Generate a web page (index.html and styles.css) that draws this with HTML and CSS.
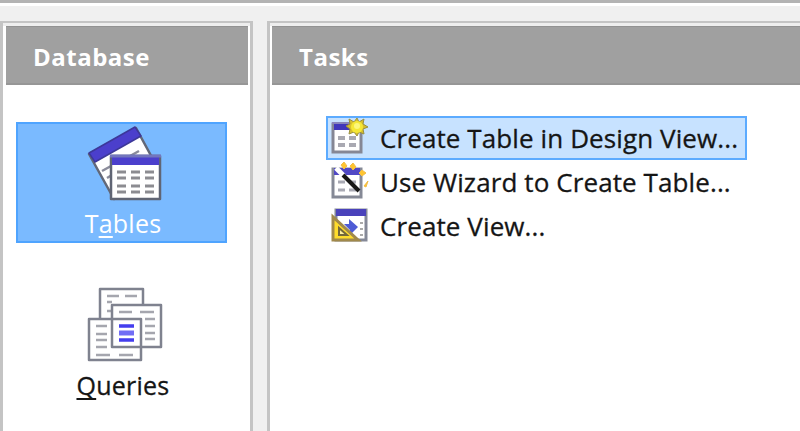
FILE: index.html
```html
<!DOCTYPE html>
<html lang="en">
<head>
<meta charset="utf-8">
<title>Database</title>
<link rel="stylesheet" href="styles.css">
</head>
<body>
<div class="toolbar-edge"></div>
<main class="workspace">
  <aside class="panel sidebar">
    <h2 class="panel-title">Database</h2>
    <nav class="objects">
      <a class="object selected">
        <svg class="object-icon" width="76" height="78" viewBox="0 0 76 78">
          <g stroke-linejoin="round">
            <path d="M2 30L49 4L68 39L27 75Z" fill="#fff" stroke="#626878" stroke-width="2.5"/>
            <path d="M2 29L48 3L54 12L8 38Z" fill="#4b3fcc" stroke="#3d3899" stroke-width="1.5"/>
            <path d="M15 47l9-5M29 39l9-5M43 32l9-5M20 54l5-3" stroke="#8b8c9b" stroke-width="2.5"/>
            <rect x="24" y="32" width="49" height="43" fill="#fff" stroke="#606574" stroke-width="2.5"/>
            <path d="M25 32h47v9H25z" fill="#4b3fcc"/>
            <path d="M23 32h51" stroke="#7376bd" stroke-width="3"/>
            <path d="M30 48h9m5 0h9m5 0h9M30 54h9m5 0h9m5 0h9M30 62h9m5 0h9m5 0h9M30 68h9m5 0h9m5 0h9" stroke="#8c8c91" stroke-width="3"/>
          </g>
        </svg>
        <span>T<u>a</u>bles</span>
      </a>
      <a class="object queries">
        <svg class="object-icon" width="76" height="78" viewBox="0 0 76 78">
          <g fill="#fff" stroke="#7f828f" stroke-width="2.5" stroke-linejoin="round">
            <rect x="13" y="3" width="43" height="42"/>
            <path d="M20 10h12m6 0h12M20 16h5M20 25h5" stroke="#a5a6ae"/>
            <rect x="25" y="19" width="49" height="42"/>
            <path d="M32 26h13m8 0h14M58 33h10M58 40h10M58 47h10M58 53h10" stroke="#a5a6ae"/>
            <rect x="2" y="33" width="52" height="41"/>
            <path d="M9 40h11M9 48h11M9 54h11M9 61h11M9 69h14m9 0h14" stroke="#a5a6ae"/>
            <path d="M25 33v28h29" fill="none"/>
          </g>
          <path d="M32 40h15M32 54h15" stroke="#443eee" stroke-width="3.5"/>
          <path d="M32 47h15" stroke="#716df5" stroke-width="5"/>
        </svg>
        <span><u>Q</u>ueries</span>
      </a>
    </nav>
  </aside>
  <section class="panel tasks">
    <h2 class="panel-title">Tasks</h2>
    <div class="task-list">
      <a class="task selected">
        <svg class="task-icon" width="40" height="40" viewBox="0 0 40 40">
          <rect x="3" y="6" width="28" height="28" fill="#fff" stroke="#858795" stroke-width="3"/>
          <path d="M4 6h26v6H4z" fill="#4037bb"/>
          <path d="M2 5h27" stroke="#8885bb" stroke-width="2"/>
          <path d="M8 20h7m4 0h7M8 27h7m4 0h7" stroke="#a9a9b2" stroke-width="4"/>
          <path d="M27 0l2 4 5-3-1 5 5 3-5 2 1 5-5-2-2 4-3-4-5 2 1-5-4-3 4-2-1-5 5 3z" fill="#d8bf2d" stroke="#999040"/>
          <circle cx="27" cy="9" r="6" fill="#f5e736"/><circle cx="27" cy="8" r="3" fill="#fcf77c"/>
        </svg>
        <span>Create Table in Design View...</span>
      </a>
      <a class="task">
        <svg class="task-icon" width="40" height="40" viewBox="0 0 40 40">
          <rect x="3" y="7" width="28" height="28" fill="#fff" stroke="#858996" stroke-width="3"/>
          <path d="M4 6h26v7H4z" fill="#5048c5"/>
          <path d="M8 20h7m4 0h7M8 28h7m4 0h7" stroke="#a9aab4" stroke-width="3"/>
          <path d="M11 3l3-3 3 4-3 3zm9 1l3-3 3 4-3 3zm9 7l3-3 4 3-4 3zm5 13l4-5-2 6z" fill="#ffc52f" stroke="#f1bc48"/>
          <path d="M6 6l8 8" stroke="#fff" stroke-width="5"/>
          <path d="M13 13l16 16" stroke="#171717" stroke-width="4"/>
        </svg>
        <span>Use Wizard to Create Table...</span>
      </a>
      <a class="task">
        <svg class="task-icon" width="40" height="40" viewBox="0 0 40 40">
          <path d="M6 4h30v30H6z" fill="#fff" stroke="#858998" stroke-width="3"/>
          <path d="M6 3h30v7H6z" fill="#4a42bb"/>
          <path d="M14 18h5v-5l9 8-8 8v-5z" fill="#4e5bd5"/>
          <path d="M30 17h3M30 23h3M30 29h3" stroke="#aaa" stroke-width="2"/>
          <path d="M3 11v23h25z" fill="#ffdc2c" stroke="#a1894b" stroke-width="3"/>
          <path d="M9 22v7h8z" fill="#fff0a0" stroke="#75683a" stroke-width="2"/>
        </svg>
        <span>Create View...</span>
      </a>
    </div>
  </section>
</main>
</body>
</html>
```
FILE: styles.css
```css
* { box-sizing: border-box; }
body { margin: 0; height: 431px; overflow: hidden; display: flex; flex-direction: column; background: #f0f0f0; color: #151515; font: 26px/34px "Open Sans", "Noto Sans", sans-serif; }
.toolbar-edge { height: 6px; flex: none; background: #b3b3b3; border-bottom: 3px solid #fff; }
.workspace { flex: 1; display: flex; gap: 14px; padding-top: 15px; }
.panel { background: #fff; border: 3px solid #c4c4c4; border-top-width: 2px; border-bottom: 0; padding: 3px 2px 0; box-shadow: inset 0 3px #eeeeee; }
.sidebar { width: 253px; flex: none; padding-left: 3px; }
.tasks { flex: 1; border-right: 0; padding-right: 0; }
.panel-title { height: 59px; margin: 0; padding: 13px 27px 0; background: #a0a0a0; border-top: 1px solid #929292; border-bottom: 2px solid #969696; color: #fff; font: 700 24px/34px "Open Sans", sans-serif; letter-spacing: .5px; white-space: nowrap; }
.objects { padding: 37px 0 0 10px; }
.object { width: 211px; height: 121px; display: flex; flex-direction: column; align-items: center; border: 2px solid transparent; font-size: 25px; letter-spacing: .25px; -webkit-text-stroke: .3px; }
.object.selected { background: #7abaff; border-color: #4fa4ff; color: #fff; -webkit-text-stroke: 0; }
.object-icon { flex: none; margin-left: 7px; }
.queries { margin-top: 41px; }
.object span { margin: 4px 0 0 3px; }
.object u { text-decoration-thickness: 2px; text-underline-offset: 3px; text-decoration-skip-ink: none; }
.task-list { padding: 31px 0 0 54px; }
.task { width: 421px; height: 44px; display: flex; align-items: center; border: 2px solid transparent; padding-left: 2px; gap: 10px; white-space: nowrap; letter-spacing: .1px; -webkit-text-stroke: .3px; }
.task.selected { background: #c7e2ff; border-color: #5cabff; }
.task-icon { flex: none; }
```
